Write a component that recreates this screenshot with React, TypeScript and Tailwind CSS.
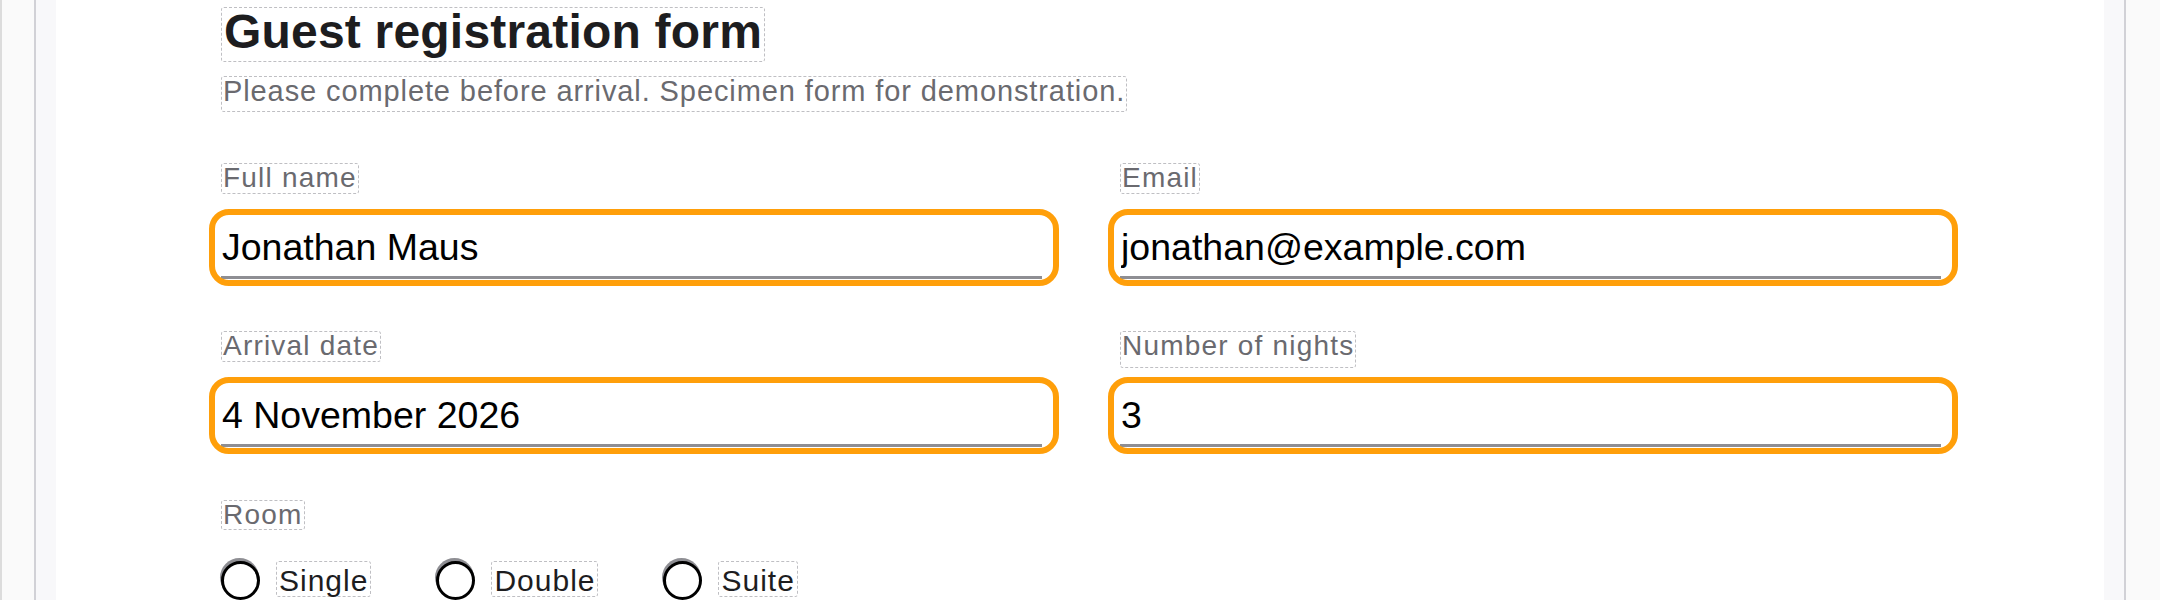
import React from "react";

const dash = "inline-block border border-dashed border-[#bfbfc3] rounded-[3px]";

function Label({ text, desc = false }: { text: string; desc?: boolean }) {
  return (
    <span
      className={`${dash} text-[28px] leading-[28px] tracking-[1.2px] text-[#6a6a6f] px-[1px] ${
        desc ? "pb-[6.5px] -mb-[5.8px]" : "pb-[0.7px]"
      }`}
    >
      {text}
    </span>
  );
}

function Field({ label, value, desc = false }: { label: string; value: string; desc?: boolean }) {
  return (
    <div className="flex flex-col items-start">
      <Label text={label} desc={desc} />
      <div className="relative mt-[27px] w-full h-[58px]">
        <input
          readOnly
          value={value}
          className="block w-full h-[58px] bg-transparent border-0 border-b-[3px] border-solid border-[#8e8e93] text-[37.5px] text-black outline-none pt-[5px] pb-[7px] px-[1px]"
        />
        <span className="pointer-events-none absolute -left-[12px] -top-[12px] -right-[17px] -bottom-[7px] border-[6px] border-solid border-[#ff9f0a] rounded-[20px]" />
      </div>
    </div>
  );
}

function Radio({ text }: { text: string }) {
  return (
    <div className="flex items-start gap-[16px]">
      <span className="block w-[39px] h-[39px] shrink-0 rounded-full border-[3.5px] border-solid border-black shadow-[-1px_-3px_0_0_#8e8e93] bg-white" />
      <span className={`${dash} text-[30px] leading-[30px] tracking-[1px] text-[#1d1d1f] pt-[4px] px-[2px]`}>
        {text}
      </span>
    </div>
  );
}

export default function App() {
  return (
    <div className="flex w-[2160px] h-[600px] overflow-hidden bg-white font-['Liberation_Sans',Arial,sans-serif]">
      <div className="w-[34px] shrink-0 bg-[#fafafa] border-l-2 border-solid border-[#dcdcdc]" />
      <div className="w-[22px] shrink-0 bg-[#f8f8fa] border-l-2 border-solid border-[#d1d1d6]" />
      <main className="flex-1 bg-white pt-[7px]">
        <div className="w-[1720px] ml-[165px] flex flex-col items-start">
          <h1 className={`${dash} text-[48px] leading-[48px] font-bold tracking-[0.2px] text-[#1d1d1f] pb-[5px] px-[2px]`}>
            Guest registration form
          </h1>
          <p className={`${dash} mt-[14px] text-[29px] leading-[29px] tracking-[0.9px] text-[#6a6a6f] pb-[5px] px-[1px]`}>
            Please complete before arrival. Specimen form for demonstration.
          </p>
          <div className="mt-[51px] grid grid-cols-[821px_821px] gap-x-[78px] gap-y-[52.7px]">
            <Field label="Full name" value="Jonathan Maus" />
            <Field label="Email" value="jonathan@example.com" />
            <Field label="Arrival date" value="4 November 2026" />
            <Field label="Number of nights" value="3" desc />
            <div className="flex flex-col items-start">
              <Label text="Room" />
              <div className="mt-[31px] flex items-start gap-[65px]">
                <Radio text="Single" />
                <Radio text="Double" />
                <Radio text="Suite" />
              </div>
            </div>
          </div>
        </div>
      </main>
      <div className="w-[22px] shrink-0 bg-[#f8f8fa] border-r-2 border-solid border-[#d1d1d6]" />
      <div className="w-[34px] shrink-0 bg-[#fafafa]" />
    </div>
  );
}
